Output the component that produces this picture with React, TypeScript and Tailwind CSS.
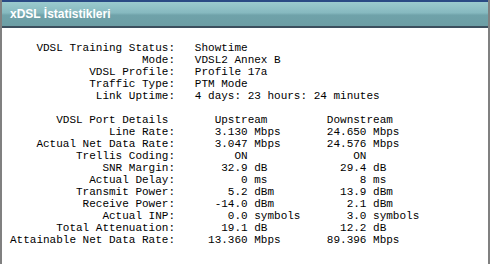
import React from "react";

const status: [string, string][] = [
  ["VDSL Training Status:", "Showtime"],
  ["Mode:", "VDSL2 Annex B"],
  ["VDSL Profile:", "Profile 17a"],
  ["Traffic Type:", "PTM Mode"],
  ["Link Uptime:", "4 days: 23 hours: 24 minutes"],
];

// label, upstream, unit, downstream, unit
const port: [string, string, string, string, string][] = [
  ["Line Rate:", "3.130", "Mbps", "24.650", "Mbps"],
  ["Actual Net Data Rate:", "3.047", "Mbps", "24.576", "Mbps"],
  ["Trellis Coding:", "ON", "", "ON", ""],
  ["SNR Margin:", "32.9", "dB", "29.4", "dB"],
  ["Actual Delay:", "0", "ms", "8", "ms"],
  ["Transmit Power:", "5.2", "dBm", "13.9", "dBm"],
  ["Receive Power:", "-14.0", "dBm", "2.1", "dBm"],
  ["Actual INP:", "0.0", "symbols", "3.0", "symbols"],
  ["Total Attenuation:", "19.1", "dB", "12.2", "dB"],
  ["Attainable Net Data Rate:", "13.360", "Mbps", "89.396", "Mbps"],
];

const buildText = () => {
  const lines: string[] = [];
  status.forEach(([label, value]) => {
    lines.push(label.padStart(25) + "   " + value);
  });
  lines.push("");
  lines.push("VDSL Port Details".padStart(24).padEnd(31) + "Upstream".padEnd(17) + "Downstream");
  port.forEach(([label, up, upUnit, down, downUnit]) => {
    const left = label.padStart(25) + up.padStart(11) + " " + upUnit;
    lines.push((left.padEnd(48) + down.padStart(6) + " " + downUnit).trimEnd());
  });
  return lines.join("\n");
};

export default function App() {
  return (
    <div className="w-[490px] h-[264px] overflow-hidden bg-white">
      <div className="h-full flex flex-col border-l-2 border-r-2 border-[#808080]">
        {/* header bar */}
        <div className="h-[28px] flex items-center px-[8px] border-t-2 border-t-[#2a4a84] border-b-2 border-b-[#3c4f5e] bg-[linear-gradient(to_bottom,#9bcace_0%,#86b9bf_45%,#6fa2a9_55%,#6c9ea5_100%)]">
          <span className="text-white font-bold text-[12px] font-['Liberation_Sans',Arial,sans-serif] leading-none">
            xDSL İstatistikleri
          </span>
        </div>

        {/* stats */}
        <div className="flex-1 pt-[14px] pl-[8px]">
          <pre className="m-0 text-[11px] leading-[12px] text-black font-['Liberation_Mono','Courier_New',monospace]">
            {buildText()}
          </pre>
        </div>
      </div>
    </div>
  );
}
